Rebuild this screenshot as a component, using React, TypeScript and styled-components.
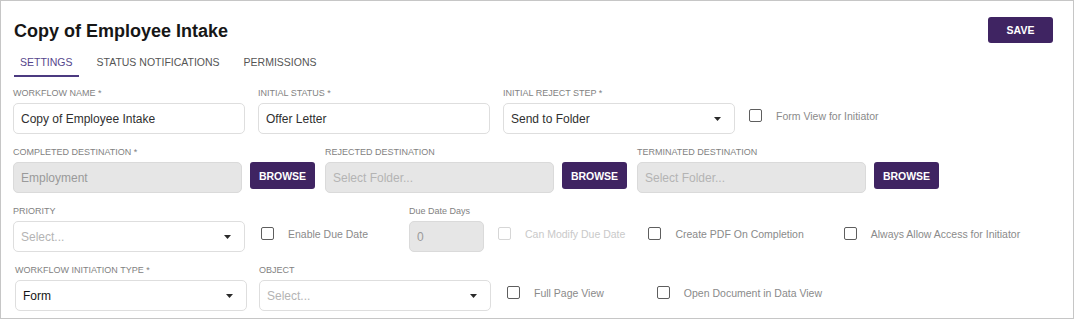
import * as React from 'react';
import styled, { createGlobalStyle } from 'styled-components';

const GlobalStyle = createGlobalStyle`
  body {
    margin: 0;
    background: #ffffff;
    font-family: "Liberation Sans", Arial, sans-serif;
  }
`;

const Frame = styled.div`
  width: 1074px;
  height: 319px;
  box-sizing: border-box;
  border: 1px solid #c6c6c6;
  padding: 0 20px 0 12px;
  background: #fff;
`;

const Header = styled.div`
  display: flex;
  justify-content: space-between;
  align-items: flex-start;
  padding-top: 16px;
`;

const Title = styled.h1`
  margin: 3px 0 0 1px;
  font-size: 18px;
  line-height: 22px;
  font-weight: 700;
  color: #161616;
`;

const PurpleButton = styled.button<{ $w: number; $h: number }>`
  width: ${(p) => p.$w}px;
  height: ${(p) => p.$h}px;
  flex: none;
  border: none;
  border-radius: 3px;
  background: #3f2462;
  color: #ffffff;
  font-family: inherit;
  font-size: 10.5px;
  font-weight: 700;
  cursor: pointer;
`;

const Tabs = styled.div`
  display: flex;
  gap: 12px;
  margin-top: 6px;
  margin-left: 1px;
`;

const Tab = styled.div<{ $active?: boolean }>`
  padding: 6px 6px;
  font-size: 10.5px;
  line-height: 14px;
  color: ${(p) => (p.$active ? '#55468c' : '#555555')};
  border-bottom: 2px solid ${(p) => (p.$active ? '#4b3a80' : 'transparent')};
`;

const Form = styled.div`
  display: flex;
  flex-direction: column;
  gap: 13px;
  margin-top: 11px;
`;

const Row = styled.div<{ $indent?: number }>`
  display: flex;
  align-items: flex-end;
  padding-left: ${(p) => p.$indent || 0}px;
`;

const Field = styled.div<{ $w: number; $gap?: number }>`
  display: flex;
  flex-direction: column;
  width: ${(p) => p.$w}px;
  margin-left: ${(p) => p.$gap || 0}px;
  flex: none;
`;

const Label = styled.div<{ $plain?: boolean }>`
  font-size: 9px;
  line-height: 11px;
  height: 11px;
  margin-bottom: 4px;
  color: #828282;
  text-transform: ${(p) => (p.$plain ? 'none' : 'uppercase')};
  white-space: nowrap;
`;

const TextInput = styled.input`
  box-sizing: border-box;
  width: 100%;
  height: 31px;
  margin: 0;
  border: 1px solid #dedede;
  border-radius: 5px;
  padding: 0 7px;
  font-family: inherit;
  font-size: 12px;
  color: #2f2f2f;
  background: #fff;
  outline: none;

  &:disabled {
    background: #e6e6e6;
    border-color: #dadada;
    color: #9a9a9a;
  }

  &::placeholder {
    color: #b4b4b4;
  }
`;

const SelectBox = styled.div<{ $empty?: boolean; $dark?: boolean }>`
  box-sizing: border-box;
  height: 31px;
  display: flex;
  align-items: center;
  justify-content: space-between;
  border: 1px solid #dedede;
  border-radius: 5px;
  padding: 0 13px 0 7px;
  font-size: 12px;
  color: ${(p) => (p.$empty ? '#b4b4b4' : p.$dark ? '#151515' : '#2f2f2f')};
`;

const Browse = styled.div`
  display: flex;
  align-items: flex-start;
  gap: 8px;
  margin-right: 10px;
  flex: none;
`;

const CheckItem = styled.label<{ $gap: number; $disabled?: boolean }>`
  display: flex;
  align-items: center;
  gap: 14px;
  height: 31px;
  margin-left: ${(p) => p.$gap}px;
  margin-bottom: 3px;
  font-size: 10.5px;
  color: ${(p) => (p.$disabled ? '#c9c9c9' : '#8a8a8a')};
  white-space: nowrap;
  flex: none;
`;

const Box = styled.span<{ $disabled?: boolean }>`
  box-sizing: border-box;
  width: 13px;
  height: 13px;
  border: 1.5px solid ${(p) => (p.$disabled ? '#d6d6d6' : '#5e5e5e')};
  border-radius: 2px;
  background: #fff;
`;

const Caret = () => (
  <svg width="7" height="4" viewBox="0 0 7 4">
    <path d="M0 0 L7 0 L3.5 4 Z" fill="#2a2a2a" />
  </svg>
);

const Select = ({ value, placeholder, dark }: { value?: string; placeholder?: string; dark?: boolean }) => (
  <SelectBox $empty={!value} $dark={dark}>
    <span>{value || placeholder}</span>
    <Caret />
  </SelectBox>
);

const Check = ({ label, gap, disabled }: { label: string; gap: number; disabled?: boolean }) => (
  <CheckItem $gap={gap} $disabled={disabled}>
    <Box $disabled={disabled} />
    {label}
  </CheckItem>
);

const destinations = [
  { label: 'Completed Destination *', value: 'Employment' },
  { label: 'Rejected Destination', value: '' },
  { label: 'Terminated Destination', value: '' },
];

export default function App() {
  return (
    <>
      <GlobalStyle />
      <Frame>
        <Header>
          <Title>Copy of Employee Intake</Title>
          <PurpleButton $w={65} $h={26}>SAVE</PurpleButton>
        </Header>

        <Tabs>
          <Tab $active>SETTINGS</Tab>
          <Tab>STATUS NOTIFICATIONS</Tab>
          <Tab>PERMISSIONS</Tab>
        </Tabs>

        <Form>
          <Row>
            <Field $w={232}>
              <Label>Workflow Name *</Label>
              <TextInput defaultValue="Copy of Employee Intake" />
            </Field>
            <Field $w={232} $gap={13}>
              <Label>Initial Status *</Label>
              <TextInput defaultValue="Offer Letter" />
            </Field>
            <Field $w={232} $gap={13}>
              <Label>Initial Reject Step *</Label>
              <Select value="Send to Folder" />
            </Field>
            <Check gap={14} label="Form View for Initiator" />
          </Row>

          <Row>
            {destinations.map((d) => (
              <Browse key={d.label}>
                <Field $w={229}>
                  <Label>{d.label}</Label>
                  <TextInput disabled defaultValue={d.value} placeholder="Select Folder..." />
                </Field>
                <div>
                  <Label />
                  <PurpleButton $w={65} $h={27}>BROWSE</PurpleButton>
                </div>
              </Browse>
            ))}
          </Row>

          <Row>
            <Field $w={232}>
              <Label>Priority</Label>
              <Select placeholder="Select..." />
            </Field>
            <Check gap={16} label="Enable Due Date" />
            <Field $w={75} $gap={41}>
              <Label $plain>Due Date Days</Label>
              <TextInput disabled defaultValue="0" />
            </Field>
            <Check gap={14} disabled label="Can Modify Due Date" />
            <Check gap={23} label="Create PDF On Completion" />
            <Check gap={40} label="Always Allow Access for Initiator" />
          </Row>

          <Row $indent={2}>
            <Field $w={232}>
              <Label>Workflow Initiation Type *</Label>
              <Select value="Form" dark />
            </Field>
            <Field $w={232} $gap={12}>
              <Label>Object</Label>
              <Select placeholder="Select..." />
            </Field>
            <Check gap={16} label="Full Page View" />
            <Check gap={53} label="Open Document in Data View" />
          </Row>
        </Form>
      </Frame>
    </>
  );
}
